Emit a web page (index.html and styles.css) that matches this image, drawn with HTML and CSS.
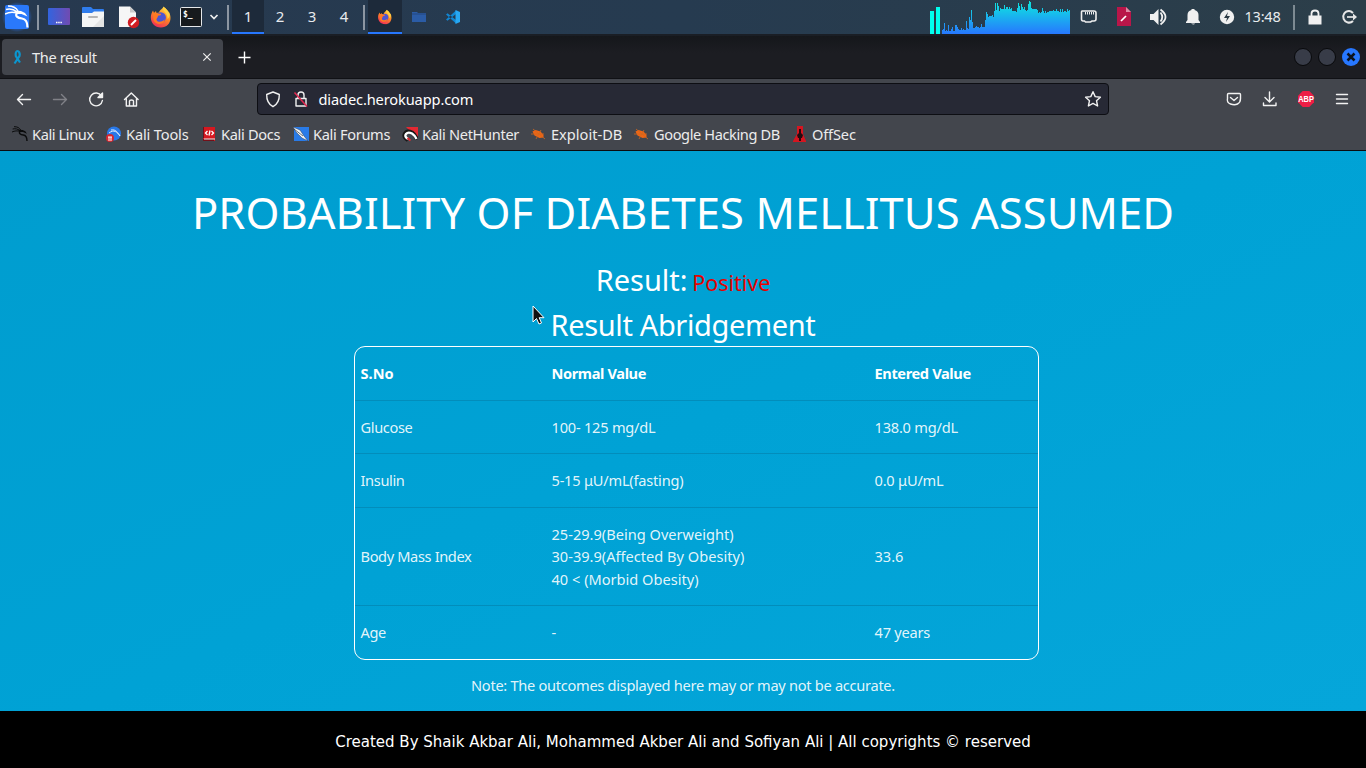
FILE: index.html
```html
<!DOCTYPE html>
<html lang="en">
<head>
<meta charset="utf-8">
<title>The result</title>
<link rel="stylesheet" href="styles.css">
</head>
<body>
<header class="panel">
  <svg class="panel-left" width="230" height="34" viewBox="0 0 230 34">
    <defs>
      <linearGradient id="desk"><stop stop-color="#3264df"/><stop offset="1" stop-color="#714bb1"/></linearGradient>
      <radialGradient id="glow"><stop offset=".6" stop-color="#2777ff" stop-opacity=".75"/><stop offset="1" stop-color="#2777ff" stop-opacity="0"/></radialGradient>
      <linearGradient id="flame" x1=".8" y1="0" x2=".3" y2="1"><stop stop-color="#ffe14d"/><stop offset=".45" stop-color="#ff8a22"/><stop offset="1" stop-color="#f02b5b"/></linearGradient>
      <symbol id="fox" viewBox="0 0 22 22">
        <path d="M3 4.500L4 7l2-2 .5 2L9 6.500C10 3 13 3 13.500.5 17 3 17.500 5 18 7l1-1c4 8-.5 15.500-8 15.500C2 21.500-2 12 3 4.500z" fill="url(#flame)"/>
        <circle cx="10.700" cy="11.500" r="5.200" fill="#4c55d3"/>
        <path d="M3 7c3-1 4 1 8 .7.5 1-1 2-3 2 .2 2-2 2.500-1.500 4.500 2 3 7 1 8-1 .5 5-8 7-11 1z" fill="#ff7a23"/>
        <path d="M13 1c-1 4 5 6 4.500 12 4-3 2-9-4.500-12z" fill="#ffd044"/>
      </symbol>
      <symbol id="dragon" viewBox="0 0 24 24">
        <path d="M3 1c5 0 8 1.500 10 5M1 4.500c4-1 8 0 11 2.500M0 9c4-2 8-2 12-1" fill="none" stroke="currentColor" stroke-width="1.500"/>
        <path d="M12.500 7.500c-3.500 3.500.5 5.500 4.500 6s5.500 3 5.500 9" fill="none" stroke="currentColor" stroke-width="2.200"/>
        <path d="M9 5.500l7 .5 4 2 2.500 3.500-6-2.500-5 0z" fill="currentColor"/>
      </symbol>
    </defs>
    <rect x="2" y="2" width="30" height="30" rx="8" fill="url(#glow)"/><rect x="5" y="5" width="24" height="24" rx="2" fill="#2a79fb"/>
    <use href="#dragon" x="5" y="5" width="24" height="24" color="#fff"/>
    <path d="M38 5v25M228 5v25" stroke="#8c96a2" stroke-width="2"/>
    <rect x="48" y="8" width="22" height="17" rx="1" fill="url(#desk)"/><path d="M56 22.500h6" stroke="#fff" stroke-width="1.500" stroke-dasharray="1.500 .7"/>
    <path d="M82 8q0-1 1-1h8l2 2h10q1 0 1 1v5H82z" fill="#2f7cec"/><path d="M82 13h10l2-1.500h10V27H82z" fill="#f5f5f5"/><path d="M104 16v11H93z" fill="#e4e4e4"/><path d="M89 17h8" stroke="#b5b5b5" stroke-width="2" stroke-linecap="round"/>
    <path d="M119 6.500h11l6 6V27h-17z" fill="#f6f6f6"/><path d="M130 6.500v6h6z" fill="#cacaca"/><circle cx="133.500" cy="22.500" r="5.700" fill="#d01d22"/><path d="M131 25l5-5" stroke="#fff" stroke-width="2"/>
    <use href="#fox" x="150" y="6" width="22" height="22"/>
    <rect x="180.500" y="7.500" width="21" height="19" rx="1" fill="#171a1d" stroke="#e6e8ea"/>
    <text x="183" y="16.500" class="prompt">$_</text>
    <path d="M210.500 15l3.500 3.500 3.500-3.500" fill="none" stroke="#eee" stroke-width="1.700"/>
  </svg>
  <nav class="spaces"><span class="on">1</span><span>2</span><span>3</span><span>4</span></nav>
  <svg width="115" height="34" viewBox="360 0 115 34">
    <path d="M364 5v25" stroke="#8c96a2" stroke-width="2"/>
    <path d="M368 0h34v34h-34z" fill="#1d2a3a"/><path d="M368 32h34v2h-34z" fill="#2777ff"/>
    <use href="#fox" x="377.500" y="9.500" width="15" height="15"/>
    <path d="M412 12h5l1 1h8v9h-14z" fill="#2b5ca6"/><path d="M412 14h14" stroke="#24477f"/>
    <path d="M446 14.500l1.500-1.200L456 20v3.500zM446 19.500l1.500 1.200L456 14v-3.500z" fill="#1186d2"/><path d="M455.500 10l4.500 2v10l-4.500 2z" fill="#27a7f2"/>
  </svg>
  <svg class="push" width="332" height="34" viewBox="925 0 332 34">
    <defs><linearGradient id="cpu" x1="0" y1="0" x2="0" y2="1"><stop stop-color="#0de9df"/><stop offset="1" stop-color="#2777ff"/></linearGradient></defs>
    <path d="M930 11h4v23h-4zM936 7h4v27h-4z" fill="#0fe"/>
    <path shape-rendering="crispEdges" fill="url(#cpu)" d="M942 34V30h1v-1h1v-6h1v8h1v-1h1v1h1v-6h1v6h2v-2h1v-2h1v4h2v-6h2v2h1v2h1v1h2v-2h1v2h1v-1h1v1h2v-9h1v7h1v1h1V17h1v3h1v-10h1v12h1v6h2v-1h1v-1h1v1h2v1h1v-1h1v-3h1v3h3V20h1v-8h1v2h1v3h1v-1h3v-1h1v2h1V11h1V3h1v7h1V3h1v3h1v5h1V8h1v1h3V5h1v4h1V7h2v2h1V7h1v2h1v-1h1v3h4v1h1V8h1V3h1v3h1v4h1V4h1v3h1v2h1V7h1v3h1v1h1v-1h1V4h1V1h1v1h1v6h1v1h5v1h1v3h1v-1h1v1h1v-1h1V8h1v3h1v2h1v-2h1v2h1v-1h2v-1h4v-1h1v1h2V9h1v2h2v1h1V9h1v3h1V9h1v3h1v-1h2v1h1V9h1v2h1v-1h1v24z"/>
    <path d="M1083 11h11q2 0 2 2v6q0 2-2 2h-2l-1.500 1h-5l-1-1h-1.500q-1.500 0-1.500-2v-7q0-1 .5-1z" fill="none" stroke="#eee" stroke-width="1.600"/><path d="M1085.500 12v2.500M1087.500 12v2.500M1089.500 12v2.500M1091.500 12v2.500M1093.500 12v2.500" stroke="#eee"/>
    <path d="M1117 7h9l5 5v14h-14z" fill="#b91649"/><path d="M1126 7v5h5z" fill="#df8aa4"/><path d="M1121 21l5-5" stroke="#fff" stroke-width="1.700"/>
    <path d="M1150 14h3.500l5-5v16l-5-5h-3.500z" fill="#f0f0f0"/><path d="M1160.500 12.500q3.500 4.500 0 9M1160.500 9.500q10 7.500 0 15" fill="none" stroke="#f0f0f0" stroke-width="1.800"/>
    <path d="M1186 23v-1l1.500-2v-5q0-4 4-5V9h3v1q4 1 4 5v5l1.500 2v1zM1191 23.500h4q-1 2-4 0z" fill="#f0f0f0"/>
    <circle cx="1227" cy="17" r="7.200" fill="#f0f0f0"/><path d="M1228 12l-4 6h3l-1 4 4-6h-3z" fill="#2c3a45"/>
  </svg>
  <time class="clock">13:48</time>
  <svg width="82" height="34" viewBox="1284 0 82 34">
    <path d="M1294 5v25" stroke="#7d8a92" stroke-width="2"/>
    <path d="M1308.500 15.500h13v9h-13z" fill="#f0f0f0"/><path d="M1311.500 16v-2.500q0-3 3.500-3t3.500 3V16" fill="none" stroke="#f0f0f0" stroke-width="1.800"/>
    <path d="M1353 13q-2-2-4-2a5.800 5.800 0 1 0 4 10" fill="none" stroke="#e7e7e7" stroke-width="2"/><path d="M1347 17h7" stroke="#e7e7e7" stroke-width="1.700"/><path d="M1353 13.500l4 3.500-4 3.500z" fill="#e7e7e7"/>
  </svg>
</header>

<section class="tabstrip">
  <div class="tab">
    <svg width="12" height="16" viewBox="0 0 12 16"><path d="M3 14.500L8 7c.8-3-.8-5-2-5S3.700 4 4.300 7l4.200 6.500" fill="none" stroke="#0b96cf" stroke-width="2.200" transform="translate(-.5 0)"/></svg>
    <span class="tab-title">The result</span>
    <svg class="push" width="10" height="10" viewBox="0 0 10 10"><path d="M1.300 1.300l7.400 7.400M8.700 1.300L1.300 8.700" stroke="#eee" stroke-width="1.200"/></svg>
  </div>
  <svg class="plus" width="13" height="13" viewBox="0 0 13 13"><path d="M6.500.5v12M.5 6.500h12" stroke="#fff" stroke-width="1.400"/></svg>
  <svg class="push" width="74" height="22" viewBox="1292 46 74 22"><g fill="#383c48" stroke="#08090b"><circle cx="1303" cy="57" r="8.500"/><circle cx="1327" cy="57" r="8.500"/></g><circle cx="1351" cy="57" r="9" fill="#2777ff"/><path d="M1347.500 53.500l7 7M1354.500 53.500l-7 7" stroke="#0c1320" stroke-width="2.500"/></svg>
</section>

<section class="toolbar">
  <svg width="257" height="40" viewBox="0 79 257 40" fill="none" stroke="#f2f2f2" stroke-width="1.400" stroke-linecap="round" stroke-linejoin="round">
    <path d="M30.500 99.500h-13M22.500 94.500l-5 5 5 5"/>
    <path d="M53.500 99.500h13M61.500 94.500l5 5-5 5" stroke="#808187"/>
    <path d="M101.500 96a6.400 6.400 0 1 0 .9 4.500"/><path d="M98 97.500h4.500V93z" fill="#f2f2f2"/>
    <path d="M124.500 99.500l6.800-6.500 6.800 6.500M126.300 98.500v7.500h10.200v-7.500M129.500 106v-5q0-1 2-1t2 1v5"/>
  </svg>
  <div class="url">
    <svg width="52" height="30" viewBox="258 84 52 30" fill="none" stroke="#f0f0f0" stroke-width="1.400" stroke-linejoin="round"><path d="M273 92l6.300 2.500c.2 6-1.300 9.500-6.300 12.200-5-2.700-6.500-6.200-6.300-12.200z"/><path d="M296 98.500h10v7.500h-10zM298 98v-3q0-3 3-3t3 3v3"/><path d="M294.500 92.500l12.500 14" stroke="#e22850" stroke-width="1.500"/></svg>
    <span>diadec.herokuapp.com</span>
    <svg class="star push" width="18" height="18" viewBox="0 0 18 18"><path d="M9 1.700l2.200 4.900 5.200.6-3.900 3.500 1.100 5.300L9 13.400 4.400 16l1.100-5.300-3.900-3.500 5.200-.6z" fill="none" stroke="#f2f2f2" stroke-width="1.400" stroke-linejoin="round"/></svg>
  </div>
  <svg class="push" width="146" height="40" viewBox="1220 79 146 40" fill="none" stroke="#f2f2f2" stroke-width="1.400" stroke-linecap="round" stroke-linejoin="round">
    <path d="M1228.500 93.500h11q1 0 1 1v4q0 4-3 5.500t-7 0-3-5.500v-4q0-1 1-1zM1230.500 97.500l3.500 3 3.500-3"/>
    <path d="M1269.500 92v9.500M1265 97.500l4.500 4.500 4.500-4.500M1263.500 103v2.500h12.500V103"/>
    <path d="M1302.700 91h6.600l4.700 4.700v6.600l-4.700 4.700h-6.600l-4.700-4.700v-6.600z" fill="#ed1e45" stroke="none"/>
    <text transform="translate(1306 102.400) scale(.78 1)" class="abp" stroke="none">ABP</text>
    <path d="M1336.500 94.500h11M1336.500 99h11M1336.500 103.500h11"/>
  </svg>
</section>

<nav class="bookmarks">
  <a><svg width="16" height="16" color="#0b0c0d"><use href="#dragon" width="16" height="16"/></svg><span class="tight">Kali Linux</span></a>
  <a><svg width="16" height="16"><circle cx="8" cy="7.500" r="7" fill="#2878e9"/><path d="M3 7c5-4 8-1 11 3M5 4c5-1 7 3 9 6" fill="none" stroke="#dcecff"/><circle cx="4" cy="12" r="4" fill="#d7262f"/><path d="M2 11h4M3 11v4M5 11v4" stroke="#fff"/></svg><span class="loose">Kali Tools</span></a>
  <a><svg width="16" height="16"><path d="M2 1h12v14H2z" fill="#d61820"/><path d="M2 1v11h1V1zM2 13h11v2H2z" fill="#731019"/><path d="M3 13h11" stroke="#eee"/><path d="M6.500 5l-2 2 2 2M10.500 5l2 2-2 2M9 4.500l-1 5" fill="none" stroke="#fff" stroke-width="1.300"/></svg><span>Kali Docs</span></a>
  <a><svg width="16" height="16"><path d="M1 1h15v14H1z" fill="#297be8"/><path d="M0 1l7 3 4 6 4 5-6-3-6-6z" fill="#f5f5f5" stroke="#253854" stroke-width=".5"/><path d="M1 3l9 7" stroke="#25374c" stroke-width=".7"/></svg><span>Kali Forums</span></a>
  <a><svg width="16" height="16"><path d="M4 1h12v12z" fill="#e32932"/><path d="M6 14Q1 11 3 7.500t7-1q3 2 5 7" fill="none" stroke="#171717" stroke-width="4"/><path d="M6 13Q2 10.500 4 8t6-.5q3 2 4.500 5.500" fill="none" stroke="#fff" stroke-width="2.400"/><path d="M5.500 12l3 2.500" stroke="#e32932" stroke-width="2"/></svg><span>Kali NetHunter</span></a>
  <a><svg width="16" height="16"><path d="M1.500 5.500l3-1.500 5 1.500 3 3.500v2.500l-4 .5-5-2.500z" fill="#ef6514"/><path d="M0 8h13M5 13l5-9M2 3l12 10" stroke="#cf681f" stroke-width=".8" fill="none"/></svg><span class="wide">Exploit-DB</span></a>
  <a><svg width="16" height="16"><path d="M1.500 5.500l3-1.500 5 1.500 3 3.500v2.500l-4 .5-5-2.500z" fill="#ef6514"/><path d="M0 8h13M5 13l5-9M2 3l12 10" stroke="#cf681f" stroke-width=".8" fill="none"/></svg><span class="tight">Google Hacking DB</span></a>
  <a><svg width="15" height="16"><path d="M4 0h6v8l3 7v1H0v-1l4-7z" fill="#d51520"/><path d="M6 3h2v4l2 2-1 3H8v3H6v-3H5l-1-3 2-2z" fill="#240c10"/></svg><span class="loose">OffSec</span></a>
</nav>

<main class="page">
  <h1>PROBABILITY OF DIABETES MELLITUS ASSUMED</h1>
  <h2 class="result">Result: <span class="positive">Positive</span></h2>
  <h2 class="subtitle">Result Abridgement</h2>
  <table>
    <tr class="head"><th>S.No</th><th>Normal Value</th><th>Entered Value</th></tr>
    <tr class="r2"><td>Glucose</td><td>100- 125 mg/dL</td><td>138.0 mg/dL</td></tr>
    <tr class="r3"><td>Insulin</td><td>5-15 μU/mL(fasting)</td><td>0.0 μU/mL</td></tr>
    <tr class="r4"><td>Body Mass Index</td><td>25-29.9(Being Overweight)<br>30-39.9(Affected By Obesity)<br>40 &lt; (Morbid Obesity)</td><td>33.6</td></tr>
    <tr class="r5"><td>Age</td><td>-</td><td>47 years</td></tr>
  </table>
  <p class="note">Note: The outcomes displayed here may or may not be accurate.</p>
  <svg class="cursor" width="14" height="21" viewBox="0 0 14 21"><path d="M1 1v16l3.500-3.500L7 19l2.500-1-2.300-5.300H12z" fill="#111" stroke="#fff"/></svg>
</main>
<footer>Created By Shaik Akbar Ali, Mohammed Akber Ali and Sofiyan Ali | All copyrights © reserved</footer>
</body>
</html>
```
FILE: styles.css
```css
* { box-sizing: border-box; }
body { margin: 0; width: 1366px; height: 768px; overflow: hidden; display: flex; flex-direction: column; font-family: "Noto Sans", sans-serif; color: #fff; background: #000; }
svg { display: block; flex: none; }
.push { margin-left: auto; }
.panel { height: 36px; flex: none; display: flex; background: linear-gradient(90deg, #27394f, #263b50 50%, #2c3e49); border-bottom: 2px solid #1a1e25; }
.prompt { font: bold 8px "DejaVu Sans Mono", monospace; fill: #fff; }
.spaces { display: flex; margin-left: 2px; width: 128px; height: 34px; font-size: 15px; line-height: 33px; text-align: center; color: #e8ebee; }
.spaces span { width: 32px; flex: none; }
.spaces .on { background: #1d2a3a; border-bottom: 2px solid #2777ff; }
.clock { width: 27px; flex: 1 0 27px; max-width: 27px; font-size: 14.5px; line-height: 33px; letter-spacing: -.2px; white-space: nowrap; text-indent: -12.5px; color: #e8ebee; }
.tabstrip { height: 43px; flex: none; display: flex; align-items: center; background: linear-gradient(#15171b, #1c1d22 40%); border-bottom: 1px solid #101115; }
.tab { width: 221px; height: 36px; margin-left: 2px; padding: 0 11px 0 10px; display: flex; align-items: center; background: #42454c; border-radius: 4px; }
.tab-title { margin-left: 8px; font-size: 14.6px; letter-spacing: -.36px; color: #ececec; }
.plus { margin-left: 15px; }
.toolbar { height: 40px; flex: none; display: flex; align-items: center; background: #43464d; }
.url { width: 852px; height: 32px; display: flex; align-items: center; background: #272935; border: 1px solid #0d0e13; border-radius: 4px; font-size: 14.6px; letter-spacing: -.12px; }
.url span { margin-left: 8.5px; }
.star { margin-right: 6px; }
.bookmarks { height: 32px; flex: none; padding: 0 0 2px 12px; display: grid; grid-template-columns: 94px 95px 92px 109px 129px 103px 159px 100px; align-items: center; background: #43464d; border-bottom: 1px solid #0b0c10; font-size: 14.6px; letter-spacing: -.32px; color: #ececec; }
.bookmarks a { display: flex; align-items: center; gap: 4px; white-space: nowrap; }
.tight { letter-spacing: -.4px; }
.loose { letter-spacing: -.15px; }
.wide { letter-spacing: 0; }
.page { position: relative; height: 560px; flex: none; background: linear-gradient(155deg, #009dcf, #00a2d5 50%, #05a6da); text-align: center; }
h1, h2, p { margin: 0; font-weight: 400; white-space: nowrap; }
h1 { padding-top: 31px; font-size: 43.5px; line-height: 60px; letter-spacing: .05px; }
.result { margin-top: 17px; font-size: 29px; line-height: 41px; }
.positive { font-size: 21.5px; color: #e60000; margin-left: -3px; }
.subtitle { margin: 1px 0; font-size: 29px; line-height: 41px; letter-spacing: -.36px; }
table { width: 685px; height: 314px; margin-left: 354px; border: 1px solid #fff; border-radius: 11px; border-spacing: 0; table-layout: fixed; font-size: 14.6px; line-height: 22.5px; text-align: left; }
th, td { padding: 0 5px; vertical-align: middle; }
th { letter-spacing: -.38px; }
td { color: rgba(255,255,255,.9); letter-spacing: -.22px; }
td:first-child { letter-spacing: -.36px; padding-left: 5.500px; }
th:first-child { width: 191.500px; letter-spacing: 0; padding-left: 5.500px; }
th:nth-child(2) { width: 323px; }
.r4 td:nth-child(n+2) { letter-spacing: 0; }
tr + tr td { border-top: 1px solid #028dbb; }
.head { height: 53px; }
.r2 { height: 53px; }
.r3 { height: 54px; }
.r4 { height: 98px; }
.r5 { height: 54px; }
.note { margin-top: 13px; font-size: 14.6px; line-height: 24px; letter-spacing: -.285px; color: rgba(255,255,255,.9); }
.cursor { position: absolute; left: 532px; top: 154px; }
.abp { font: bold 9.5px "Liberation Sans", sans-serif; fill: #fff; text-anchor: middle; }
footer { height: 57px; flex: none; font: 15px/62px "DejaVu Sans", sans-serif; text-align: center; white-space: nowrap; }
```
